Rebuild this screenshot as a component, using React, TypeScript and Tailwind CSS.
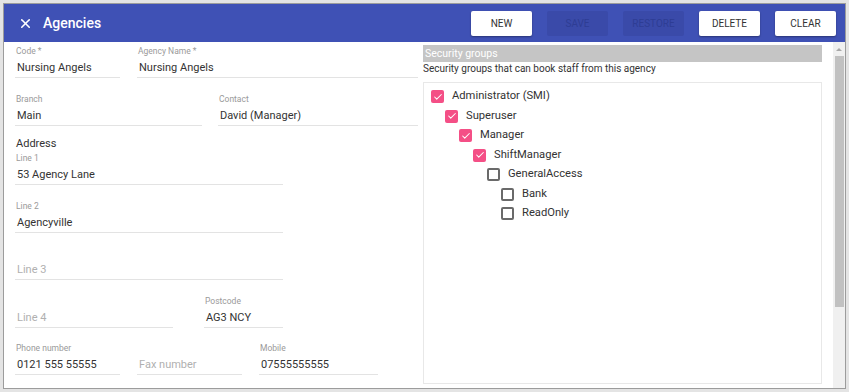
import { X, Check } from "lucide-react";

type FieldProps = {
  label?: string;
  value?: string;
  placeholder?: string;
  w: string;
};

function Field({ label, value, placeholder, w }: FieldProps) {
  return (
    <div className={`${w} flex flex-col border-b border-[#e3e3e3]`}>
      <div className="h-[11px] pl-[1px] text-[8.5px] leading-[11px] text-[#9a9a9a]">{label}</div>
      <div className="h-[20px] pt-[1px] pl-[2px] text-[11px] leading-[19px] text-[#333]">
        {value ?? <span className="text-[#b0b0b0]">{placeholder}</span>}
      </div>
    </div>
  );
}

const groups = [
  { name: "Administrator (SMI)", level: 0, checked: true },
  { name: "Superuser", level: 1, checked: true },
  { name: "Manager", level: 2, checked: true },
  { name: "ShiftManager", level: 3, checked: true },
  { name: "GeneralAccess", level: 4, checked: false },
  { name: "Bank", level: 5, checked: false },
  { name: "ReadOnly", level: 5, checked: false },
];

const indents = ["pl-[7px]", "pl-[21px]", "pl-[35px]", "pl-[49px]", "pl-[63px]", "pl-[77px]"];

const buttons = [
  { label: "NEW", disabled: false },
  { label: "SAVE", disabled: true },
  { label: "RESTORE", disabled: true },
  { label: "DELETE", disabled: false },
  { label: "CLEAR", disabled: false },
];

export default function App() {
  return (
    <div className="w-[849px] h-[392px] bg-[#e4e4e4] p-[3px] font-['Roboto',sans-serif]">
      <div className="w-full h-full border border-[#9c9c9c] bg-white flex flex-col overflow-hidden">
        <header className="h-[38px] shrink-0 bg-[#3f51b5] flex items-center pl-[14px] pr-[9px]">
          <X size={15} strokeWidth={2.5} className="text-white" />
          <h1 className="ml-[10px] text-[14px] font-medium text-white">Agencies</h1>
          <div className="ml-auto flex gap-[15px]">
            {buttons.map((b) => (
              <button
                key={b.label}
                type="button"
                className={`w-[61px] h-[25px] rounded-[2px] text-[10px] ${
                  b.disabled
                    ? "bg-[#3a4aa9] text-[#2e3d94]"
                    : "bg-white text-[#333] shadow-[0_1px_2px_rgba(0,0,0,0.35)]"
                }`}
              >
                {b.label}
              </button>
            ))}
          </div>
        </header>

        <div className="flex flex-1 min-h-0">
          <div className="w-[414px] shrink-0 pl-[11px] pt-[4px] flex flex-col">
            <div className="flex gap-[17px]">
              <Field label="Code *" value="Nursing Angels" w="w-[105px]" />
              <Field label="Agency Name *" value="Nursing Angels" w="w-[281px]" />
            </div>
            <div className="flex gap-[16px] mt-[16px]">
              <Field label="Branch" value="Main" w="w-[187px]" />
              <Field label="Contact" value="David (Manager)" w="w-[200px]" />
            </div>
            <div className="mt-[9px] h-[18px] pl-[1px] text-[11px] leading-[18px] text-[#333]">Address</div>
            <Field label="Line 1" value="53 Agency Lane" w="w-[268px]" />
            <div className="mt-[16px]">
              <Field label="Line 2" value="Agencyville" w="w-[268px]" />
            </div>
            <div className="mt-[15px]">
              <Field placeholder="Line 3" w="w-[268px]" />
            </div>
            <div className="flex gap-[31px] mt-[16px]">
              <Field placeholder="Line 4" w="w-[158px]" />
              <Field label="Postcode" value="AG3 NCY" w="w-[79px]" />
            </div>
            <div className="flex gap-[17px] mt-[15px]">
              <Field label="Phone number" value="0121 555 55555" w="w-[105px]" />
              <Field placeholder="Fax number" w="w-[105px]" />
              <Field label="Mobile" value="07555555555" w="w-[119px]" />
            </div>
          </div>

          <div className="ml-[5px] w-[399px] shrink-0 pt-[3px] pb-[4px] flex flex-col">
            <div className="h-[17px] bg-[#c5c5c5] pl-[2px] text-[10.5px] leading-[17px] text-white">Security groups</div>
            <div className="h-[14px] text-[10px] leading-[14px] text-[#333]">
              Security groups that can book staff from this agency
            </div>
            <div className="mt-[6px] flex-1 border border-[#e8e8e8] pt-[4px]">
              {groups.map((g) => (
                <div key={g.name} className={`${indents[g.level]} h-[19.5px] flex items-center gap-[8px]`}>
                  {g.checked ? (
                    <span className="w-[13px] h-[13px] rounded-[2px] bg-[#f44f86] flex items-center justify-center">
                      <Check size={10} strokeWidth={2.5} className="text-white" />
                    </span>
                  ) : (
                    <span className="w-[13px] h-[13px] rounded-[2px] border-2 border-[#6a6a6a]" />
                  )}
                  <span className="text-[11.2px] text-[#333]">{g.name}</span>
                </div>
              ))}
            </div>
          </div>

          <div className="ml-[11px] w-[12px] shrink-0 bg-[#f0f0f0] flex flex-col items-center">
            <div className="h-[14px] flex items-center justify-center">
              <div className="w-0 h-0 border-l-[3px] border-r-[3px] border-b-[3px] border-l-transparent border-r-transparent border-b-[#a8a8a8]" />
            </div>
            <div className="w-[9px] h-[251px] bg-[#c1c1c1]" />
          </div>
        </div>
      </div>
    </div>
  );
}
